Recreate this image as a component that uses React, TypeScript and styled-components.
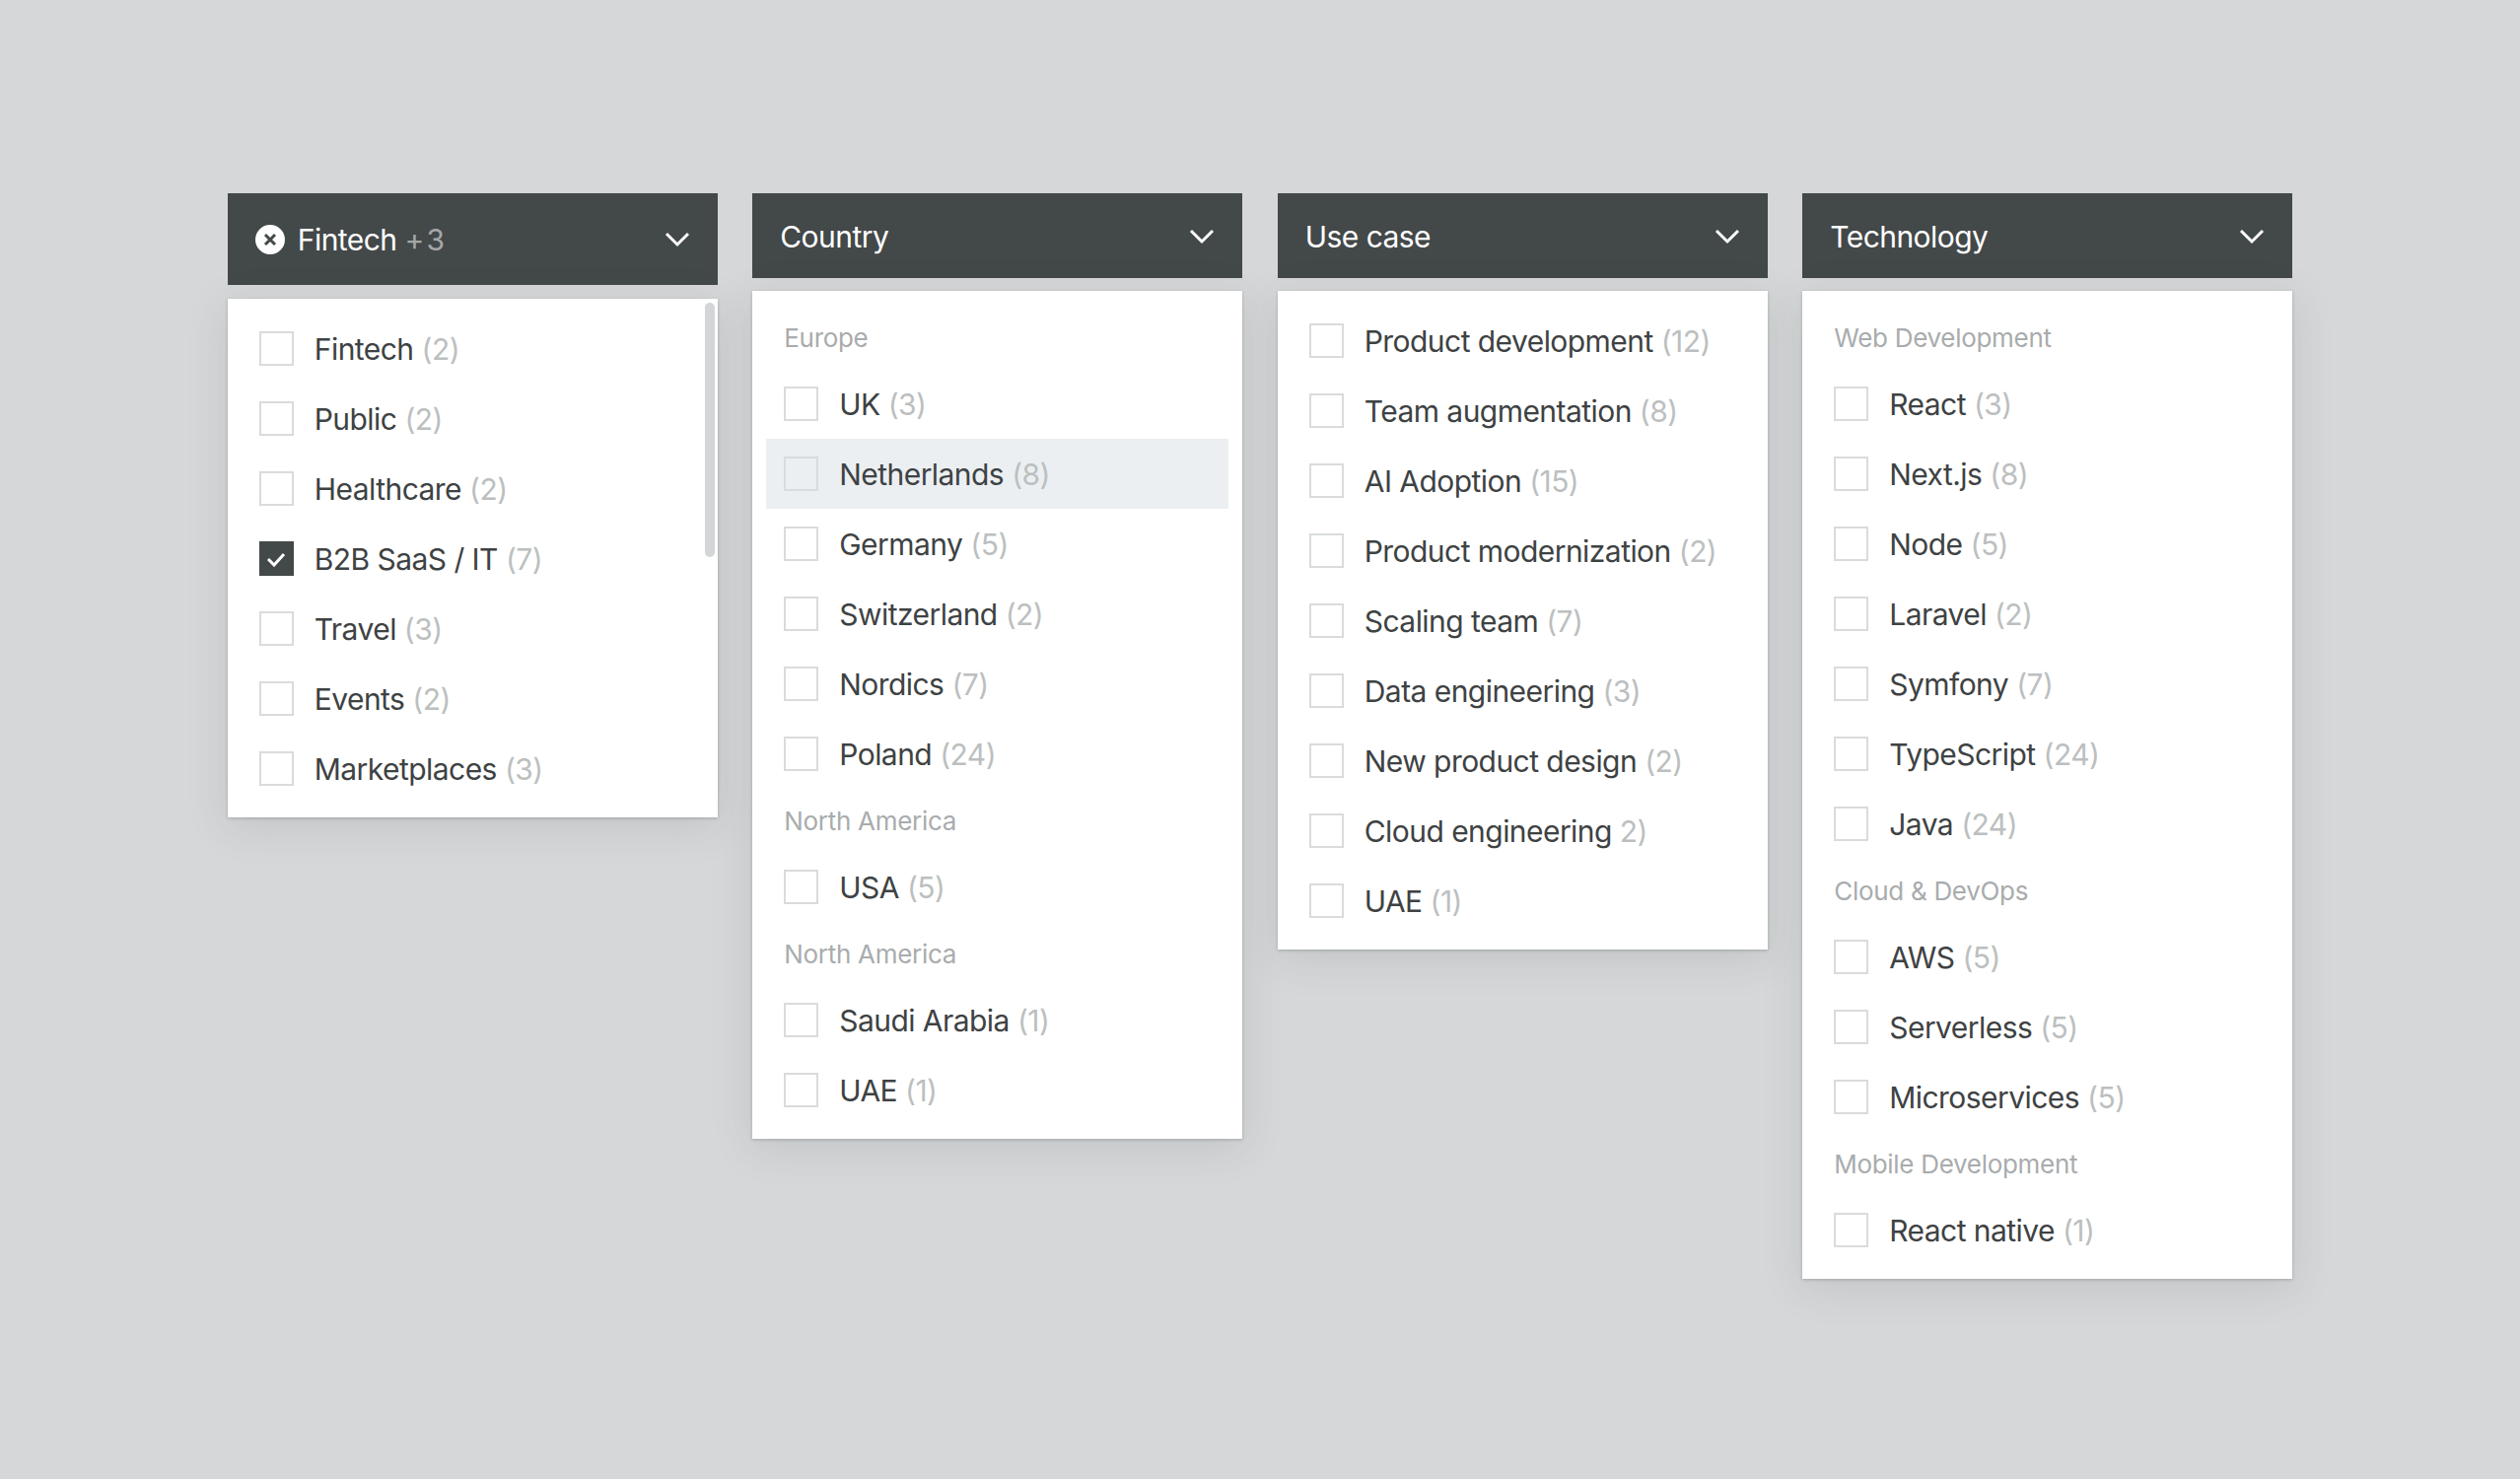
import React from "react";
import styled, { createGlobalStyle } from "styled-components";

const Global = createGlobalStyle`
  html, body { margin: 0; padding: 0; background: #d5d7d8; }
  body { font-family: Inter, "Liberation Sans", sans-serif; }
`;

const Page = styled.div`
  width: 2556px;
  height: 1500px;
  box-sizing: border-box;
  padding-top: 196px;
  display: flex;
  justify-content: center;
  align-items: flex-start;
  gap: 35.5px;
  background: #d5d7d8;
  overflow: hidden;
`;

const Column = styled.section`
  width: 497px;
  display: flex;
  flex-direction: column;
`;

const Header = styled.div<{ $tall?: boolean }>`
  height: ${(p) => (p.$tall ? 93 : 86)}px;
  margin-bottom: ${(p) => (p.$tall ? 14 : 13)}px;
  box-sizing: border-box;
  padding: 0 28px 0 28px;
  display: flex;
  align-items: center;
  gap: 13px;
  background: #434849;
  color: #fff;
  font-size: 30px;
  letter-spacing: -0.55px;
`;

const HeaderLabel = styled.span<{ $tall?: boolean }>`
  flex: 1;
  padding-top: ${(p) => (p.$tall ? 0 : 2)}px;
`;

const More = styled.span`
  color: #a3a7a8;
  word-spacing: -5px;
`;

const Chevron = styled.svg`
  width: 26px;
  height: 17px;
  flex: none;
`;

const ClearIcon = styled.svg`
  width: 30px;
  height: 30px;
  flex: none;
`;

const Panel = styled.div`
  position: relative;
  box-sizing: border-box;
  padding: 15px 14px 14px;
  background: #fff;
  box-shadow: 0 8px 40px rgba(60, 66, 70, 0.13), 0 1px 3px rgba(60, 66, 70, 0.28);
`;

const Scrollbar = styled.div`
  position: absolute;
  top: 4px;
  right: 3px;
  width: 10px;
  height: 258px;
  border-radius: 5px;
  background: #d3d5d6;
`;

const GroupLabel = styled.div`
  height: 64px;
  box-sizing: border-box;
  padding: 1px 0 0 18px;
  display: flex;
  align-items: center;
  color: #a9acad;
  font-size: 26px;
  letter-spacing: -0.3px;
`;

const Row = styled.div<{ $hover?: boolean }>`
  height: 71px;
  box-sizing: border-box;
  padding-left: 18px;
  display: flex;
  align-items: center;
  gap: 21px;
  font-size: 30px;
  letter-spacing: -0.55px;
  color: #3e4243;
  background: ${(p) => (p.$hover ? "#ebeff2" : "transparent")};
`;

const Box = styled.span<{ $checked?: boolean }>`
  width: 35px;
  height: 35px;
  box-sizing: border-box;
  flex: none;
  display: flex;
  align-items: center;
  justify-content: center;
  border: 2px solid ${(p) => (p.$checked ? "#434849" : "#d9dbdc")};
  background: ${(p) => (p.$checked ? "#434849" : "transparent")};
`;

const Count = styled.span`
  color: #bcbfc0;
  margin-left: 8px;
`;

const Check = styled.svg`
  width: 20px;
  height: 16px;
`;

type Item = { label: string; count: string; checked?: boolean; hover?: boolean };
type Entry = Item | { group: string };

const ChevronIcon = () => (
  <Chevron viewBox="0 0 26 17" fill="none">
    <path d="M2 3l11 11L24 3" stroke="#fff" strokeWidth="3" />
  </Chevron>
);

const Option = ({ label, count, checked, hover }: Item) => (
  <Row $hover={hover}>
    <Box $checked={checked}>
      {checked && (
        <Check viewBox="0 0 20 16" fill="none">
          <path d="M2 8l6 6L18 3" stroke="#fff" strokeWidth="3" />
        </Check>
      )}
    </Box>
    <span>
      {label}
      <Count>{count}</Count>
    </span>
  </Row>
);

const List = ({ entries }: { entries: Entry[] }) => (
  <>
    {entries.map((e, i) =>
      "group" in e ? <GroupLabel key={i}>{e.group}</GroupLabel> : <Option key={i} {...e} />
    )}
  </>
);

const o = (label: string, count: string, extra?: Partial<Item>): Item => ({ label, count, ...extra });

const industry: Entry[] = [
  o("Fintech", "(2)"),
  o("Public", "(2)"),
  o("Healthcare", "(2)"),
  o("B2B SaaS / IT", "(7)", { checked: true }),
  o("Travel", "(3)"),
  o("Events", "(2)"),
  o("Marketplaces", "(3)"),
];

const country: Entry[] = [
  { group: "Europe" },
  o("UK", "(3)"),
  o("Netherlands", "(8)", { hover: true }),
  o("Germany", "(5)"),
  o("Switzerland", "(2)"),
  o("Nordics", "(7)"),
  o("Poland", "(24)"),
  { group: "North America" },
  o("USA", "(5)"),
  { group: "North America" },
  o("Saudi Arabia", "(1)"),
  o("UAE", "(1)"),
];

const useCase: Entry[] = [
  o("Product development", "(12)"),
  o("Team augmentation", "(8)"),
  o("AI Adoption", "(15)"),
  o("Product modernization", "(2)"),
  o("Scaling team", "(7)"),
  o("Data engineering", "(3)"),
  o("New product design", "(2)"),
  o("Cloud engineering", "2)"),
  o("UAE", "(1)"),
];

const technology: Entry[] = [
  { group: "Web Development" },
  o("React", "(3)"),
  o("Next.js", "(8)"),
  o("Node", "(5)"),
  o("Laravel", "(2)"),
  o("Symfony", "(7)"),
  o("TypeScript", "(24)"),
  o("Java", "(24)"),
  { group: "Cloud & DevOps" },
  o("AWS", "(5)"),
  o("Serverless", "(5)"),
  o("Microservices", "(5)"),
  { group: "Mobile Development" },
  o("React native", "(1)"),
];

export default function App() {
  return (
    <>
      <Global />
      <Page>
        <Column>
          <Header $tall>
            <ClearIcon viewBox="0 0 30 30">
              <circle cx="15" cy="15" r="15" fill="#fff" />
              <path d="M10 10l10 10M20 10L10 20" stroke="#434849" strokeWidth="3" />
            </ClearIcon>
            <HeaderLabel $tall>
              Fintech <More>+ 3</More>
            </HeaderLabel>
            <ChevronIcon />
          </Header>
          <Panel>
            <Scrollbar />
            <List entries={industry} />
          </Panel>
        </Column>
        <Column>
          <Header>
            <HeaderLabel>Country</HeaderLabel>
            <ChevronIcon />
          </Header>
          <Panel>
            <List entries={country} />
          </Panel>
        </Column>
        <Column>
          <Header>
            <HeaderLabel>Use case</HeaderLabel>
            <ChevronIcon />
          </Header>
          <Panel>
            <List entries={useCase} />
          </Panel>
        </Column>
        <Column>
          <Header>
            <HeaderLabel>Technology</HeaderLabel>
            <ChevronIcon />
          </Header>
          <Panel>
            <List entries={technology} />
          </Panel>
        </Column>
      </Page>
    </>
  );
}
